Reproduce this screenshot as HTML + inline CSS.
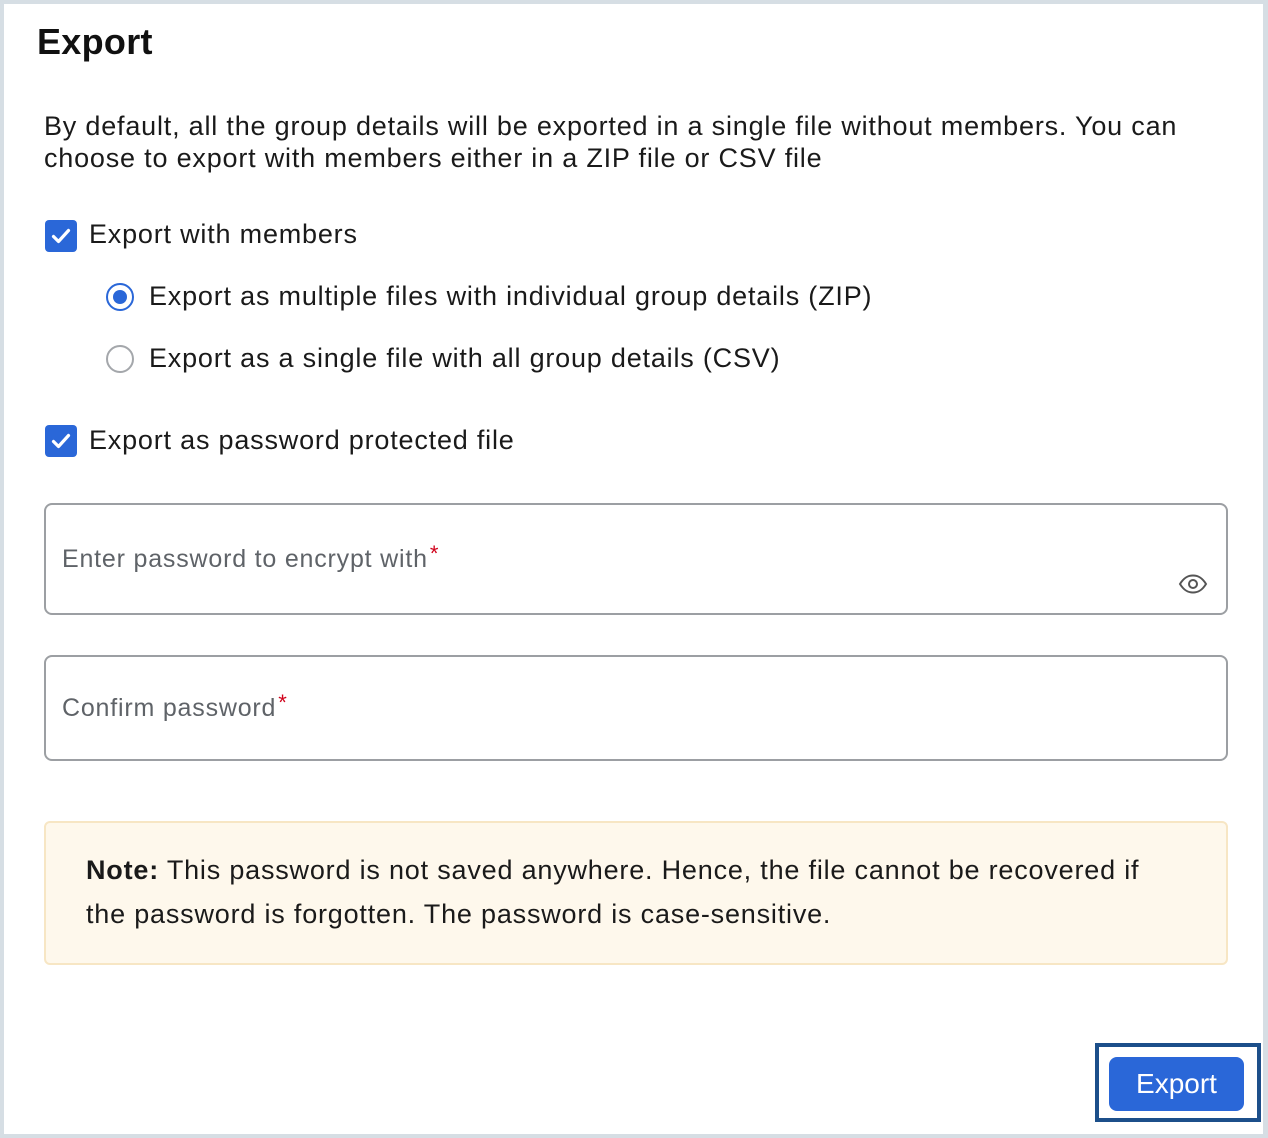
<!DOCTYPE html>
<html><head><style>
html,body{margin:0;padding:0}
body{width:1268px;height:1138px;background:#d6dee4;position:relative;font-family:"Liberation Sans",Arial,sans-serif;color:#1a1a1a;overflow:hidden}
.card{position:absolute;left:4px;top:4px;width:1259px;height:1130px;background:#fff}
.a{position:absolute;white-space:nowrap}
.t{font-size:27px;line-height:32px;letter-spacing:0.8px}
.cb{position:absolute;width:32px;height:32px;background:#2a67d8;border-radius:4px}
.rd{position:absolute;width:28px;height:28px;border-radius:50%;box-sizing:border-box}
.in{position:absolute;left:44px;width:1184px;box-sizing:border-box;border:2px solid #9c9fa3;border-radius:8px}
.ph{font-size:25px;color:#5f6368;letter-spacing:0.8px}
.ph b{color:#d0021b;font-weight:normal;position:relative;top:-6px;font-size:22px;margin-left:2px}
</style></head><body>
<div class="card"></div>
<div class="a" style="left:37px;top:20px;font-size:36px;font-weight:bold;line-height:44px;color:#111;letter-spacing:0.3px">Export</div>
<div class="a t" style="left:44px;top:110px">By default, all the group details will be exported in a single file without members. You can<br>choose to export with members either in a ZIP file or CSV file</div>

<div class="cb" style="left:45px;top:220px"><svg width="32" height="32" viewBox="0 0 32 32"><path d="M8.5 16.5l5 5 10-11" fill="none" stroke="#fff" stroke-width="3.2" stroke-linecap="round" stroke-linejoin="round"/></svg></div>
<div class="a t" style="left:89px;top:218px">Export with members</div>

<div class="rd" style="left:106px;top:283px;border:2.5px solid #2a67d8"><div style="position:absolute;left:4.5px;top:4.5px;width:14px;height:14px;border-radius:50%;background:#2a67d8"></div></div>
<div class="a t" style="left:149px;top:280px">Export as multiple files with individual group details (ZIP)</div>
<div class="rd" style="left:106px;top:345px;border:2px solid #a4a7ab"></div>
<div class="a t" style="left:149px;top:342px">Export as a single file with all group details (CSV)</div>

<div class="cb" style="left:45px;top:425px"><svg width="32" height="32" viewBox="0 0 32 32"><path d="M8.5 16.5l5 5 10-11" fill="none" stroke="#fff" stroke-width="3.2" stroke-linecap="round" stroke-linejoin="round"/></svg></div>
<div class="a t" style="left:89px;top:424px">Export as password protected file</div>

<div class="in" style="top:503px;height:112px"></div>
<div class="a ph" style="left:62px;top:545px">Enter password to encrypt with<b>*</b></div>
<svg class="a" style="left:1178px;top:573px" width="30" height="22" viewBox="0 0 30 22"><path d="M2 11C6 4.5 10 2.5 15 2.5S24 4.5 28 11C24 17.5 20 19.5 15 19.5S6 17.5 2 11Z" fill="none" stroke="#555" stroke-width="2"/><circle cx="15" cy="11" r="4" fill="none" stroke="#555" stroke-width="2"/></svg>

<div class="in" style="top:655px;height:106px"></div>
<div class="a ph" style="left:62px;top:694px">Confirm password<b>*</b></div>

<div class="a" style="left:44px;top:821px;width:1184px;height:144px;box-sizing:border-box;background:#fef8ec;border:2px solid #f7e6c4;border-radius:6px"></div>
<div class="a t" style="left:86px;top:848px;line-height:44px">
<b>Note:</b> This password is not saved anywhere. Hence, the file cannot be recovered if<br>the password is forgotten. The password is case-sensitive.</div>

<div class="a" style="left:1095px;top:1043px;width:166px;height:79px;box-sizing:border-box;border:4px solid #1c4f8a"></div>
<div class="a" style="left:1109px;top:1057px;width:135px;height:54px;background:#2a67d8;border-radius:8px;color:#fff;font-size:28px;line-height:54px;text-align:center">Export</div>
</body></html>
